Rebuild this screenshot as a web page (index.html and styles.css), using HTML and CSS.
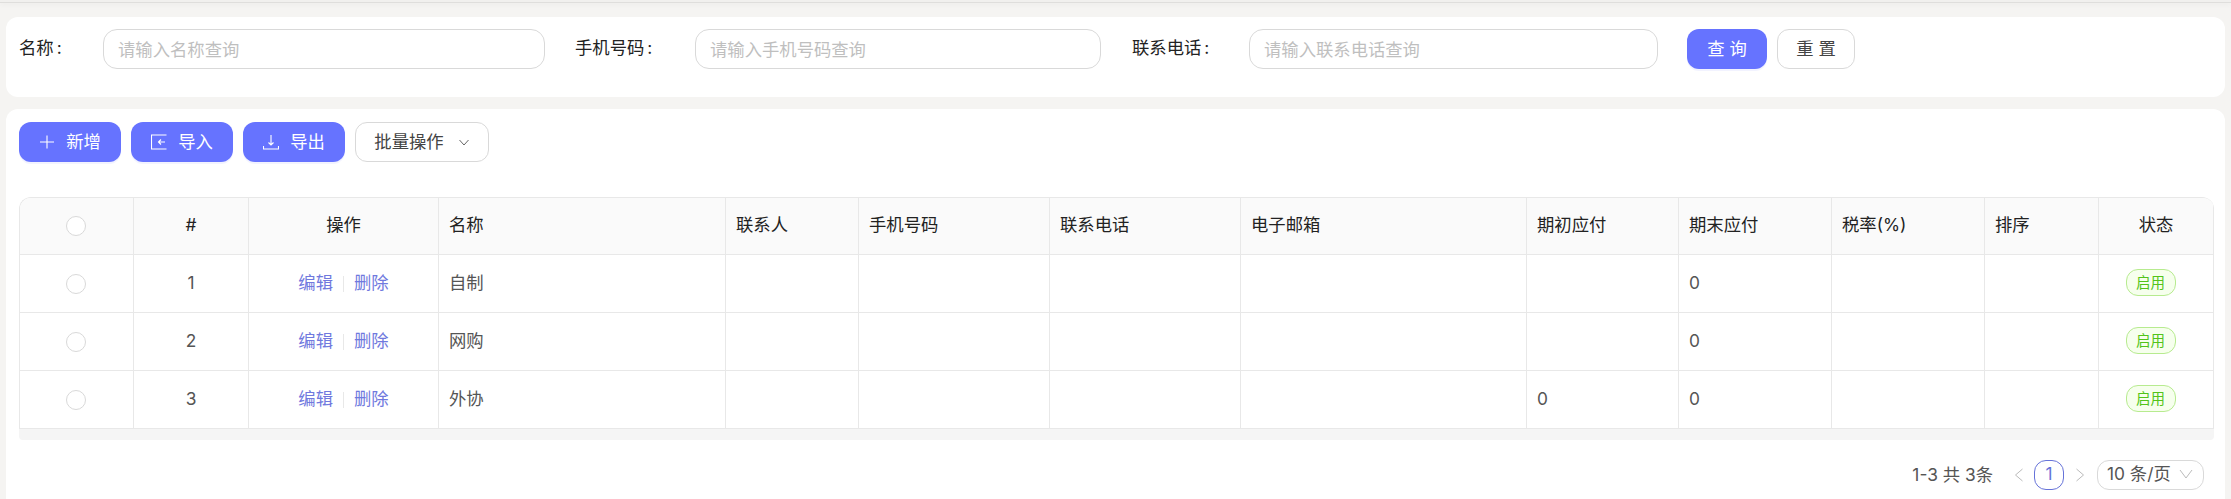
FILE: index.html
```html
<!DOCTYPE html>
<html lang="zh-CN">
<head>
<meta charset="utf-8">
<title>供应商</title>
<link rel="stylesheet" href="styles.css">
</head>
<body>
<div class="topline"></div>
<main class="page">
  <section class="card search">
    <label class="lbl lbl-a">名称<i>:</i></label>
    <div class="input in-a">请输入名称查询</div>
    <label class="lbl lbl-b">手机号码<i>:</i></label>
    <div class="input in-b">请输入手机号码查询</div>
    <label class="lbl lbl-c">联系电话<i>:</i></label>
    <div class="input in-c">请输入联系电话查询</div>
    <div class="btn primary query">查 询</div>
    <div class="btn plain reset">重 置</div>
  </section>
  <section class="card list">
    <div class="toolbar">
      <div class="btn primary act">
        <svg class="ico" viewBox="0 0 16 16"><path d="M8 1.5v13M1 8h14"/></svg><span>新增</span>
      </div>
      <div class="btn primary act">
        <svg class="ico" viewBox="0 0 16 16"><path d="M15.5 1H.5v14h15M14 8H7.5M10 5.5 7.5 8l2.5 2.5"/></svg><span>导入</span>
      </div>
      <div class="btn primary act">
        <svg class="ico" viewBox="0 0 16 16"><path d="M8 1v10M5.5 8.5 8 11l2.5-2.5M.5 12v3h15v-3"/></svg><span>导出</span>
      </div>
      <div class="btn plain batch">批量操作
        <svg class="chev" viewBox="0 0 12 12"><path d="M1.5 4 6 9l4.5-5"/></svg>
      </div>
    </div>
    <div class="table-wrap">
      <table>
        <colgroup>
          <col class="c1"><col class="c2"><col class="c3"><col class="c4"><col class="c5"><col class="c6"><col class="c6"><col class="c7"><col class="c9"><col class="c8"><col class="c8"><col class="c1"><col class="c2">
        </colgroup>
        <thead>
          <tr>
            <th class="mid"><span class="radio"></span></th><th class="mid">#</th><th class="mid">操作</th><th>名称</th><th>联系人</th><th>手机号码</th><th>联系电话</th><th>电子邮箱</th><th>期初应付</th><th>期末应付</th><th>税率(%)</th><th>排序</th><th class="mid">状态</th>
          </tr>
        </thead>
        <tbody>
          <tr>
            <td class="mid"><span class="radio"></span></td><td class="mid">1</td>
            <td class="mid"><a class="link">编辑</a><b class="sep"></b><a class="link">删除</a></td>
            <td>自制</td><td></td><td></td><td></td><td></td><td></td><td>0</td><td></td><td></td>
            <td class="mid"><span class="tag">启用</span></td>
          </tr>
          <tr>
            <td class="mid"><span class="radio"></span></td><td class="mid">2</td>
            <td class="mid"><a class="link">编辑</a><b class="sep"></b><a class="link">删除</a></td>
            <td>网购</td><td></td><td></td><td></td><td></td><td></td><td>0</td><td></td><td></td>
            <td class="mid"><span class="tag">启用</span></td>
          </tr>
          <tr>
            <td class="mid"><span class="radio"></span></td><td class="mid">3</td>
            <td class="mid"><a class="link">编辑</a><b class="sep"></b><a class="link">删除</a></td>
            <td>外协</td><td></td><td></td><td></td><td></td><td>0</td><td>0</td><td></td><td></td>
            <td class="mid"><span class="tag">启用</span></td>
          </tr>
        </tbody>
      </table>
      <div class="scrollbar"></div>
    </div>
    <div class="pager">
      <span class="total">1-3 共 3条</span>
      <svg class="pg-arrow prev" viewBox="0 0 12 16"><path d="M9.5 2 2.5 8l7 6"/></svg>
      <span class="pg-num">1</span>
      <svg class="pg-arrow next" viewBox="0 0 12 16"><path d="M2.5 2l7 6-7 6"/></svg>
      <div class="size">10 条/页<svg class="chev-lg" viewBox="0 0 14 12"><path d="M1 2l6 8 6-8"/></svg></div>
    </div>
  </section>
</main>
</body>
</html>
```
FILE: styles.css
```css
* { box-sizing: border-box; }
html, body { margin: 0; padding: 0; height: 499px; overflow: hidden; }
body {
  background: #f5f4f2;
  color: #333;
  font: 17.33px/24px Inter, "Noto Sans CJK SC", "Noto Sans", sans-serif;
}
.topline { height: 3px; background: #f1f0ee; border-bottom: 1px solid #dfdedc; box-shadow: 0 2px 5px rgba(0,0,0,.04); }
.page { height: 496px; padding: 14px 6px 0; display: flex; flex-direction: column; gap: 12px; }
.card { background: #fff; border-radius: 12px; }
.search { flex: none; height: 80px; display: flex; align-items: flex-start; padding: 12px 0 0 13px; }
.list { flex: 1; border-radius: 12px 12px 0 0; }
.lbl { height: 40px; line-height: 38px; color: #222; white-space: nowrap; }
.lbl i { font-style: normal; margin-left: 3px; }
.lbl-a { width: 84px; }
.lbl-b { width: 120px; margin-left: 30px; }
.lbl-c { width: 117px; margin-left: 31px; }
.input {
  height: 40px; line-height: 39px; padding: 0 14px;
  border: 1px solid #d9d9d9; border-radius: 14px;
  color: #bfbfbf;
}
.in-a { width: 442px; }
.in-b { width: 406px; }
.in-c { width: 409px; }
.btn {
  height: 40px; border-radius: 12px; display: flex; align-items: center; justify-content: center;
  white-space: nowrap; padding-bottom: 1px;
}
.primary { background: #6673ff; color: #fff; box-shadow: 0 2px 0 rgba(90,100,255,.08); }
.plain { background: #fff; border: 1px solid #d9d9d9; color: #444; }
.query { width: 80px; margin-left: 29px; }
.reset { width: 78px; margin-left: 10px; }
.toolbar { display: flex; gap: 10px; padding: 13px 13px 0; }
.act { width: 102px; gap: 11px; }
.ico { width: 16px; height: 16px; fill: none; stroke: #fff; stroke-width: 1.1; }
.batch { width: 134px; gap: 14px; }
.chev { width: 12px; height: 12px; fill: none; stroke: #666; stroke-width: 1; }
.table-wrap { margin: 35px 0 0 13px; width: 2195px; }
table {
  width: 2195px; table-layout: fixed; border-collapse: separate; border-spacing: 0;
  border-top: 1px solid #e8e8e8; border-left: 1px solid #e8e8e8;
  border-radius: 12px 12px 0 0; overflow: hidden;
}
.c1 { width: 114px; }
.c2 { width: 115px; }
.c3 { width: 190px; }
.c4 { width: 287px; }
.c5 { width: 133px; }
.c6 { width: 191px; }
.c7 { width: 286px; }
.c8 { width: 153px; }
.c9 { width: 152px; }
th, td {
  padding: 0 10px 2px; text-align: left; border-right: 1px solid #e8e8e8; border-bottom: 1px solid #e8e8e8;
  font-weight: 400;
}
th { height: 57px; background: #fafafa; color: #222; }
td { height: 58px; color: #555; }
.mid { text-align: center; }
.radio {
  display: inline-block; width: 20px; height: 20px; border: 1px solid #d9d9d9; border-radius: 50%;
  background: #fff; vertical-align: middle; margin-right: 1px;
}
.link { color: #7079de; }
.sep { display: inline-block; width: 1px; height: 16px; background: #e8e8e8; margin: 0 10px; vertical-align: -3px; }
.tag {
  display: inline-block; width: 50px; height: 27px; line-height: 25px; font-size: 14.5px; text-align: center;
  color: #52c41a; background: #f6ffed; border: 1px solid #b7eb8f; border-radius: 12px; vertical-align: middle;
  margin-right: 11px;
}
.scrollbar { height: 11px; background: #f5f5f5; border-radius: 0 0 4px 4px; }
.pager {
  display: flex; align-items: center; justify-content: flex-end;
  margin: 20px 21px 0 0; height: 30px; color: #555;
}
.pg-arrow { width: 12px; height: 16px; fill: none; stroke: #bbb; stroke-width: 1; }
.prev { margin-left: 20px; }
.next { margin-left: 10px; }
.pg-num {
  width: 30px; height: 30px; line-height: 26px; text-align: center; margin-left: 9px;
  border: 1px solid #6673d9; border-radius: 12px; color: #6673d9;
}
.size {
  width: 107px; height: 30px; margin-left: 11px; padding: 0 10px 2px 9px;
  border: 1px solid #d9d9d9; border-radius: 12px; display: flex; align-items: center; justify-content: space-between; white-space: nowrap;
}
.chev-lg { width: 14px; height: 12px; fill: none; stroke: #bbb; stroke-width: 1; }
```
